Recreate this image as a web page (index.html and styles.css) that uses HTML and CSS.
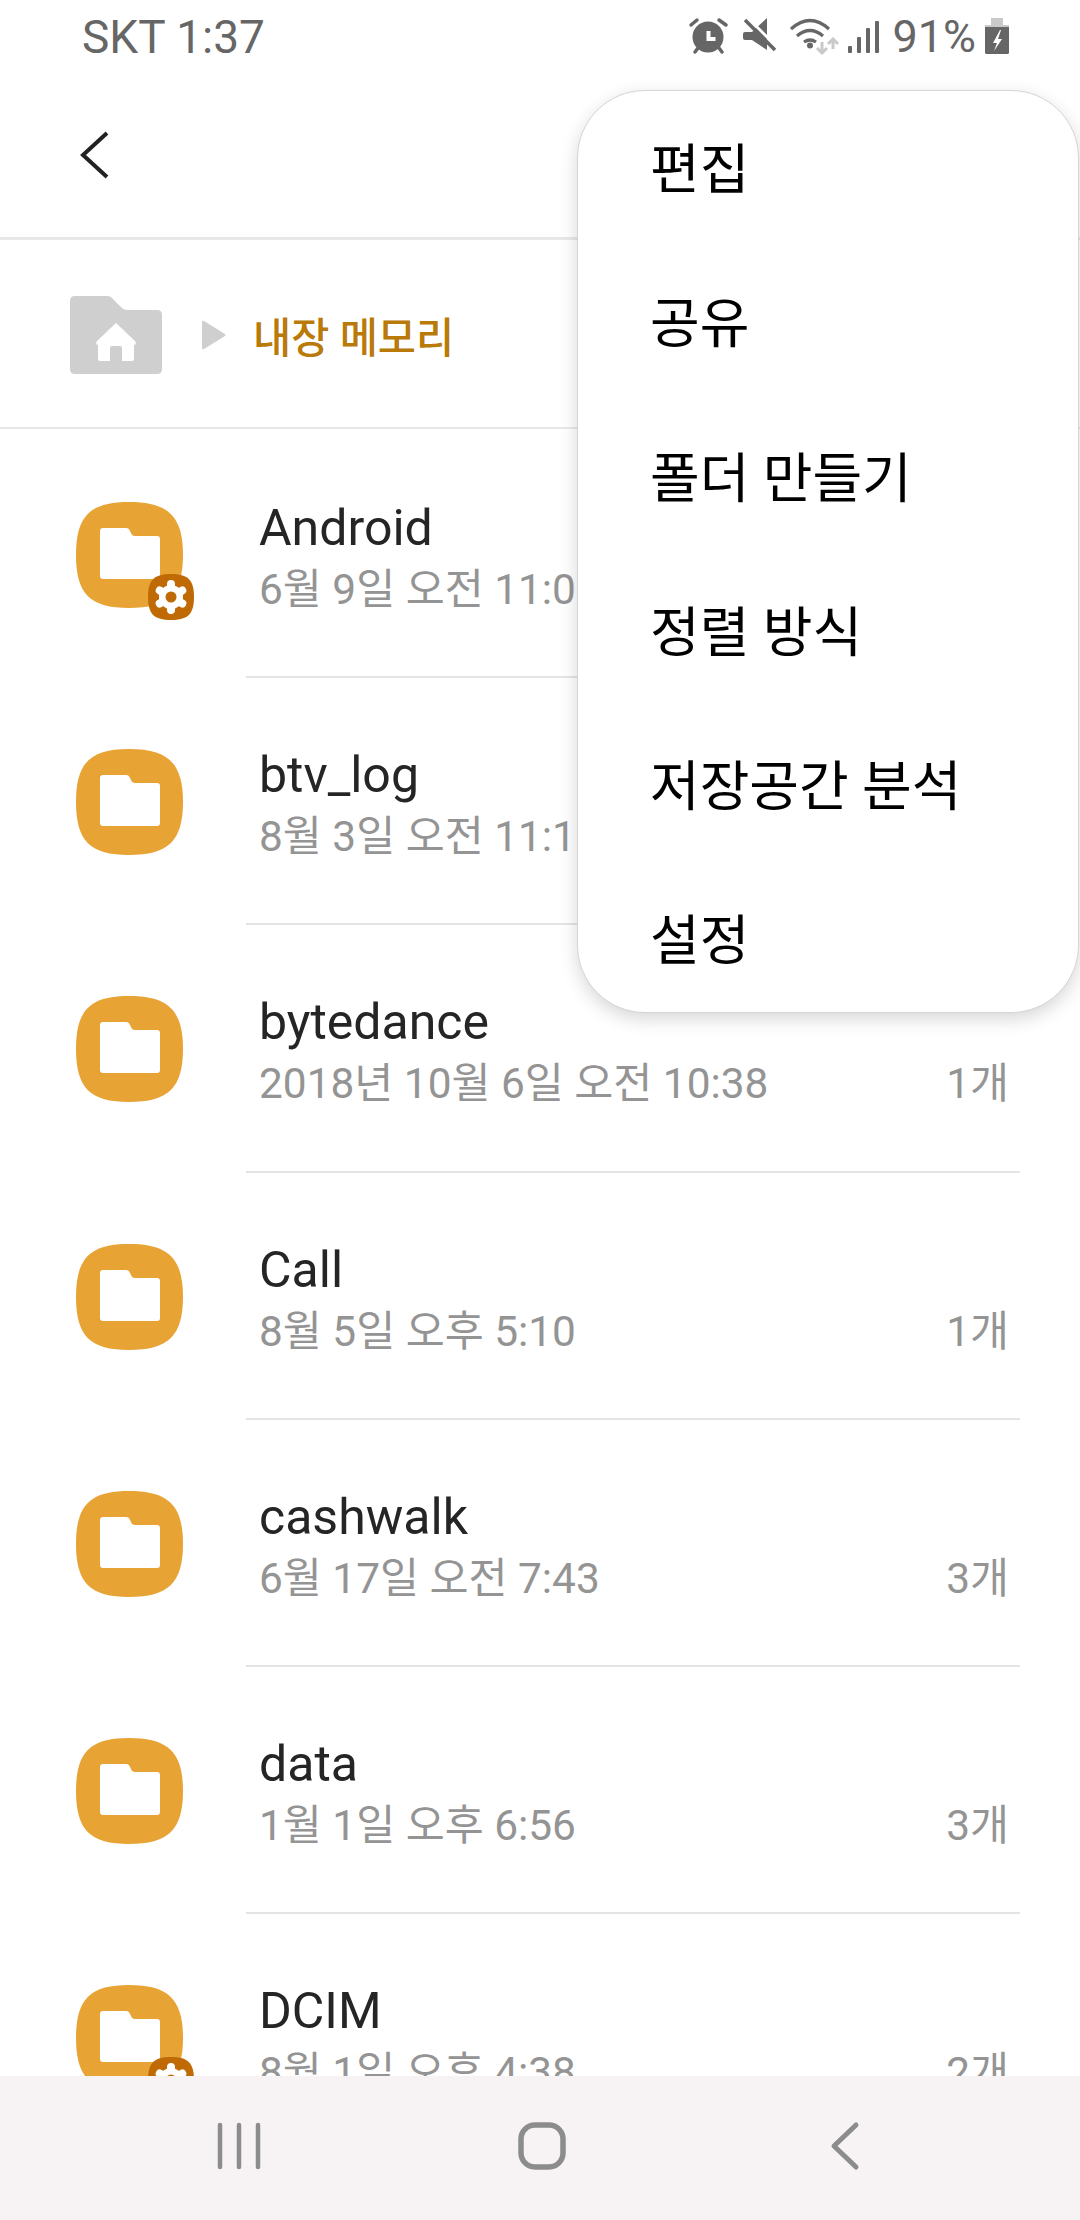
FILE: index.html
```html
<!DOCTYPE html>
<html lang="ko">
<head>
  <meta charset="UTF-8">
  <title>내장 메모리</title>
  <meta name="viewport" content="width=device-width, initial-scale=1">
  <link rel="stylesheet" href="styles.css">
</head>
<body>
  <svg class="defs" width="0" height="0">
    <symbol id="folder" viewBox="0 0 120 120">
      <path fill="#e8a335" d="M55 2C94 2 109 16 109 55S94 108 55 108 2 94 2 55 16 2 55 2Z"/>
      <path fill="#fff" d="M29 28h23q3 0 4 3l1 2q1 3 4 3h22q3 0 3 3v37q0 3-3 3H29q-3 0-3-3V31q0-3 3-3Z"/>
    </symbol>
    <symbol id="folder-gear" viewBox="0 0 120 120">
      <use href="#folder"/>
      <path fill="#bf6a05" d="M97 74c17 0 23 6 23 23s-6 23-23 23-23-6-23-23 6-23 23-23Z"/>
      <g stroke="#fff" stroke-width="8" stroke-linecap="round">
        <path d="M97 84v26M85.700 90.500l22.600 13M108.300 90.500l-22.600 13"/>
      </g>
      <circle cx="97" cy="97" r="12" fill="#fff"/>
      <circle cx="97" cy="97" r="5.5" fill="#bf6a05"/>
    </symbol>
  </svg>

  <div class="screen">
    <div class="status-bar">
      <span class="carrier">SKT 1:37</span>
      <div class="status-right">
        <svg class="status-icons" viewBox="680 0 200 70" width="200" height="70">
          <!-- alarm -->
          <g stroke="#666" stroke-width="3.5" stroke-linecap="round" fill="none">
            <path d="M689 25l6-5M717 20l7 5M693 52l3-4M720 52l-3-4"/>
          </g>
          <circle cx="706" cy="37" r="15.5" fill="#666"/>
          <path d="M706.500 31v8h7" fill="none" stroke="#fff" stroke-width="4"/>
          <!-- mute -->
          <path fill="#666" d="M741 34q0-2 2-2h7l15-14v32l-15-10h-7q-2 0-2-2Z"/>
          <path d="M745 17l31 31" stroke="#fff" stroke-width="3"/>
          <path d="M743 20l30 30" stroke="#666" stroke-width="3.5"/>
          <!-- wifi -->
          <g fill="none" stroke="#666" stroke-width="3.2">
            <path d="M789 29q19-17 38 0"/>
            <path d="M795 36q13-11 26 0"/>
            <path d="M802 42q6-4 12 0"/>
          </g>
          <circle cx="808" cy="45.500" r="3" fill="#666"/>
          <path d="M820 42v11m-5-5l5 5 5-5" fill="none" stroke="#c9c9c9" stroke-width="3"/>
          <path d="M831 49V39m-5 5l5-5 5 5" fill="none" stroke="#c9c9c9" stroke-width="3"/>
          <!-- signal -->
          <g fill="#666">
            <rect x="846" y="46" width="4" height="7" rx="1"/>
            <rect x="855" y="37" width="4" height="16" rx="1"/>
            <rect x="864" y="28" width="4" height="25" rx="1"/>
            <rect x="873" y="21" width="4" height="32" rx="1"/>
          </g>
        </svg>
        <span class="battery-level">91%</span>
        <svg class="battery" viewBox="0 0 24 36" width="24" height="36">
          <path fill="#c9c9c9" d="M6 0h12v7H6z"/>
          <rect x="0" y="7" width="24" height="29" rx="1.500" fill="#666"/>
          <path fill="#c9c9c9" d="M0 7h24v2H0z"/>
          <path fill="#fff" d="M15 12l-7 13h4l-3 8 8-12h-4l3-9Z"/>
        </svg>
      </div>
    </div>

    <div class="toolbar">
      <svg class="back" viewBox="0 0 32 50" width="32" height="50">
        <path d="M29 3L5 25l24 22" fill="none" stroke="#222" stroke-width="4"/>
      </svg>
    </div>

    <div class="breadcrumb">
      <svg class="home-folder" viewBox="0 0 92 78" width="92" height="78">
        <path fill="#cfcfcf" d="M5 0h32q4 0 6 3l9 9q2 2 5 2h30q5 0 5 5v54q0 5-5 5H5q-5 0-5-5V5q0-5 5-5Z"/>
        <path fill="#fff" d="M46 27l19 18q2 3-1 4v14q0 2-2 2H52V52q0-2-2-2h-8q-2 0-2 2v13H30q-2 0-2-2V49q-3-1-1-4Z"/>
      </svg>
      <svg class="crumb-arrow" viewBox="0 0 24 30" width="24" height="30">
        <path fill="#cfcfcf" d="M0 2q0-2 2-1l21 13q1 1 0 2L2 29q-2 1-2-1Z"/>
      </svg>
      <span class="crumb-label">내장 메모리</span>
    </div>

    <div class="file-list">
      <div class="file-row">
        <svg class="file-icon"><use href="#folder-gear"/></svg>
        <div class="file-body">
          <div class="file-text">
            <div class="file-name">Android</div>
            <div class="file-date">6월 9일 오전 11:07</div>
          </div>
        </div>
      </div>
      <div class="file-row">
        <svg class="file-icon"><use href="#folder"/></svg>
        <div class="file-body">
          <div class="file-text">
            <div class="file-name">btv_log</div>
            <div class="file-date">8월 3일 오전 11:13</div>
          </div>
        </div>
      </div>
      <div class="file-row">
        <svg class="file-icon"><use href="#folder"/></svg>
        <div class="file-body">
          <div class="file-text">
            <div class="file-name">bytedance</div>
            <div class="file-date">2018년 10월 6일 오전 10:38</div>
          </div>
          <div class="file-count">1개</div>
        </div>
      </div>
      <div class="file-row">
        <svg class="file-icon"><use href="#folder"/></svg>
        <div class="file-body">
          <div class="file-text">
            <div class="file-name">Call</div>
            <div class="file-date">8월 5일 오후 5:10</div>
          </div>
          <div class="file-count">1개</div>
        </div>
      </div>
      <div class="file-row">
        <svg class="file-icon"><use href="#folder"/></svg>
        <div class="file-body">
          <div class="file-text">
            <div class="file-name">cashwalk</div>
            <div class="file-date">6월 17일 오전 7:43</div>
          </div>
          <div class="file-count">3개</div>
        </div>
      </div>
      <div class="file-row">
        <svg class="file-icon"><use href="#folder"/></svg>
        <div class="file-body">
          <div class="file-text">
            <div class="file-name">data</div>
            <div class="file-date">1월 1일 오후 6:56</div>
          </div>
          <div class="file-count">3개</div>
        </div>
      </div>
      <div class="file-row">
        <svg class="file-icon"><use href="#folder-gear"/></svg>
        <div class="file-body">
          <div class="file-text">
            <div class="file-name">DCIM</div>
            <div class="file-date">8월 1일 오후 4:38</div>
          </div>
          <div class="file-count">2개</div>
        </div>
      </div>
    </div>

    <div class="nav-bar">
      <svg viewBox="0 0 48 50" width="48" height="50">
        <path d="M5 4v42M24 4v42M43 4v42" stroke="#8c8c8c" stroke-width="4.500" stroke-linecap="round"/>
      </svg>
      <svg viewBox="0 0 52 52" width="52" height="52">
        <rect x="5" y="5" width="42" height="42" rx="14" fill="none" stroke="#8c8c8c" stroke-width="5.500"/>
      </svg>
      <svg viewBox="0 0 32 50" width="32" height="50">
        <path d="M28 4L6 25l22 21" fill="none" stroke="#8c8c8c" stroke-width="5" stroke-linecap="round" stroke-linejoin="round"/>
      </svg>
    </div>

    <div class="menu">
      <div class="menu-item">편집</div>
      <div class="menu-item">공유</div>
      <div class="menu-item">폴더 만들기</div>
      <div class="menu-item">정렬 방식</div>
      <div class="menu-item">저장공간 분석</div>
      <div class="menu-item">설정</div>
    </div>
  </div>
</body>
</html>
```

FILE: styles.css
```css
html, body { margin: 0; padding: 0; background: #fff; }
body { font-family: Roboto, "Noto Sans CJK KR", sans-serif; }
.defs { display: block; height: 0; }
.screen { position: relative; width: 1080px; height: 2220px; overflow: hidden; display: flex; flex-direction: column; background: #fff; }

.status-bar { height: 72px; display: flex; justify-content: space-between; align-items: flex-start; padding: 0 71px 0 82px; flex: none; }
.carrier { font-size: 46px; line-height: 74px; color: #666; }
.status-right { display: flex; align-items: flex-start; }
.status-icons { display: block; }
.battery-level { font-size: 45px; line-height: 74px; color: #666; margin-left: 10px; }
.battery { display: block; margin: 18px 0 0 9px; }

.toolbar { height: 165px; border-bottom: 3px solid #e8e8e8; display: flex; align-items: center; padding-left: 78px; flex: none; }
.back { display: block; }

.breadcrumb { height: 189px; box-sizing: border-box; padding: 3px 0 0 70px; border-bottom: 2px solid #e8e8e8; display: flex; align-items: center; flex: none; }
.home-folder { display: block; }
.crumb-arrow { display: block; margin-left: 40px; }
.crumb-label { font-size: 41.500px; font-weight: 500; color: #b97a0a; margin-left: 27px; }

.file-list { flex: 1; min-height: 0; overflow: hidden; padding-top: 2px; }
.file-row { height: 247.2px; display: flex; }
.file-icon { width: 120px; height: 120px; margin: 69px 0 0 74px; flex: none; }
.file-body { flex: 1; margin: 0 60px 0 52px; border-bottom: 2px solid #e4e4e4; display: flex; justify-content: space-between; padding: 64px 11px 0 13px; box-sizing: border-box; }
.file-name { font-size: 50px; line-height: 66px; color: #252525; }
.file-date { font-size: 42.400px; line-height: 58px; color: #949494; }
.file-count { font-size: 42.400px; line-height: 58px; color: #949494; margin-top: 66px; }

.nav-bar { height: 144px; background: #f7f3f5; flex: none; display: grid; grid-template-columns: repeat(3, 302.5px); justify-items: center; align-items: center; padding-left: 88px; }
.nav-bar svg { display: block; margin-top: -4px; }

.menu { position: absolute; top: 90px; left: 577px; width: 502px; height: 923px; box-sizing: border-box; background: #fff; border: 1px solid #d8d4d4; border-radius: 68px; box-shadow: 0 6px 18px rgba(0,0,0,0.16); padding: 3px 0 0 72px; display: flex; flex-direction: column; }
.menu-item { height: 154.300px; line-height: 154.300px; font-size: 54px; color: #000; flex: none; }
```
